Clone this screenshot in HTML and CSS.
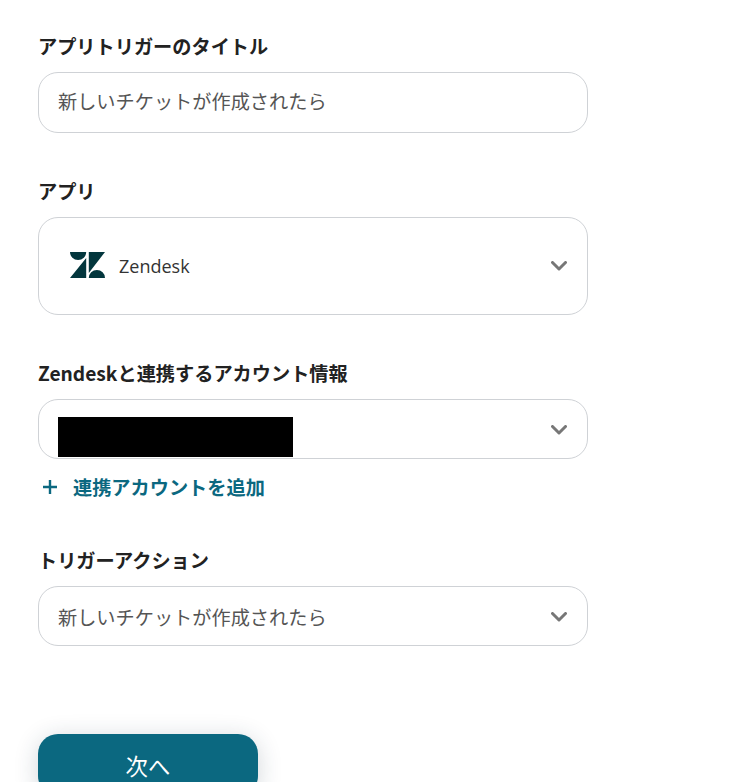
FILE: index.html
```html
<!DOCTYPE html>
<html lang="ja">
<head>
  <meta charset="UTF-8">
  <title>アプリトリガーの設定</title>
  <link rel="stylesheet" href="styles.css">
</head>
<body>
  <div class="form">
    <!-- title -->
    <div class="field field-title">
      <div class="label">アプリトリガーのタイトル</div>
      <div class="box box-input"><span class="value">新しいチケットが作成されたら</span></div>
    </div>

    <!-- app -->
    <div class="field field-app">
      <div class="label">アプリ</div>
      <div class="box box-app">
        <svg class="app-logo" viewBox="0 0 35 26" width="35" height="26">
          <path fill="#03363d" d="M0 0h16.200a8.100 8 0 0 1-16.200 0zM18.800 0H35L18.800 21zM0 26 16.200 6V26zM18.800 26a8.100 8 0 0 1 16.200 0z"/>
        </svg>
        <span class="app-name">Zendesk</span>
        <svg class="chevron" viewBox="0 0 16 10" width="16" height="10"><path d="M1.500 1.500 8 8l6.500-6.500" /></svg>
      </div>
    </div>

    <!-- account -->
    <div class="field field-account">
      <div class="label">Zendeskと連携するアカウント情報</div>
      <div class="box box-account">
        <div class="redacted"></div>
        <svg class="chevron chevron-low" viewBox="0 0 16 10" width="16" height="10"><path d="M1.500 1.500 8 8l6.500-6.500" /></svg>
      </div>
      <div class="add-link">
        <svg class="plus" viewBox="0 0 16 16" width="16" height="16"><path d="M8 1v14M1 8h14" /></svg>
        <span>連携アカウントを追加</span>
      </div>
    </div>

    <!-- action -->
    <div class="field field-action">
      <div class="label">トリガーアクション</div>
      <div class="box box-input">
        <span class="value-action">新しいチケットが作成されたら</span>
        <svg class="chevron chevron-low" viewBox="0 0 16 10" width="16" height="10"><path d="M1.500 1.500 8 8l6.500-6.500" /></svg>
      </div>
    </div>

    <button class="next-btn">次へ</button>
  </div>
</body>
</html>
```

FILE: styles.css
```css
html, body {
  margin: 0;
  height: 782px;
  overflow: hidden;
  background: #ffffff;
}
body {
  font-family: "Noto Sans CJK JP", "Noto Sans", sans-serif;
  color: #222222;
}
.form {
  width: 550px;
  padding: 31px 0 0 38px;
}
.field {
  display: flex;
  flex-direction: column;
}
.field-app { margin-top: 43px; }
.field-account { margin-top: 43px; }
.field-action { margin-top: 44px; }
.label {
  font-size: 19.2px;
  font-weight: 700;
  line-height: 30px;
  margin-bottom: 11px;
  color: #222222;
}
.box {
  box-sizing: border-box;
  display: flex;
  align-items: center;
  justify-content: space-between;
  border: 1px solid #cfd2d6;
  border-radius: 20px;
  padding: 0 19px;
  font-size: 19.2px;
  color: #555555;
}
.box-input { height: 61px; }
.field-action .box-input { height: 60px; }
.value { padding-bottom: 4px; }
.value-action { padding-top: 1px; }
.box-app {
  height: 98px;
  padding-left: 31px;
  justify-content: flex-start;
}
.box-account { height: 60px; }
.app-logo {
  flex: none;
  margin-bottom: 2px;
}
.app-name {
  font-family: "Open Sans", sans-serif;
  font-size: 18px;
  color: #333333;
  margin-left: 14px;
}
.box-app .chevron { margin-left: auto; }
.chevron {
  flex: none;
  margin-right: 1px;
}
.chevron-low { margin-top: 2px; }
.chevron path {
  fill: none;
  stroke: #777777;
  stroke-width: 3;
  stroke-linecap: round;
  stroke-linejoin: round;
}
.redacted {
  width: 235px;
  height: 40px;
  margin-top: 15px;
  background: #000000;
}
.add-link {
  display: flex;
  align-items: center;
  margin-top: 14px;
  padding-left: 4px;
  font-size: 19.2px;
  font-weight: 700;
  line-height: 28px;
  color: #0b6880;
}
.plus { flex: none; margin-right: 15px; }
.plus path {
  fill: none;
  stroke: #0b6880;
  stroke-width: 2.4;
}
.next-btn {
  display: block;
  width: 220px;
  height: 62px;
  margin-top: 88px;
  border: none;
  border-radius: 20px;
  background: #0b6880;
  color: #ffffff;
  font-family: inherit;
  font-size: 22.4px;
  box-shadow: 0 4px 24px rgba(30, 50, 70, 0.2);
}
```
